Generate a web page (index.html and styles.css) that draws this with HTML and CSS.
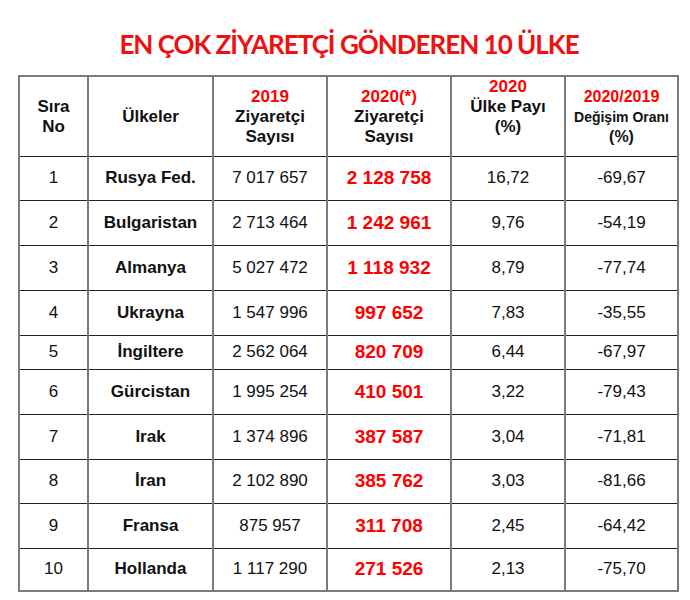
FILE: index.html
```html
<!DOCTYPE html>
<html lang="tr">
<head>
<meta charset="utf-8">
<title>En Çok Ziyaretçi Gönderen 10 Ülke</title>
<link rel="stylesheet" href="styles.css">
</head>
<body>
<div class="page">
  <h1 class="title">EN ÇOK ZİYARETÇİ GÖNDEREN 10 ÜLKE</h1>
  <table class="data">
    <colgroup>
      <col class="c1"><col class="c2"><col class="c3"><col class="c4"><col class="c5"><col class="c6">
    </colgroup>
    <thead>
      <tr class="head">
        <th>Sıra<br>No</th>
        <th>Ülkeler</th>
        <th><span class="red">2019</span><br>Ziyaretçi<br>Sayısı</th>
        <th><span class="red">2020(*)</span><br>Ziyaretçi<br>Sayısı</th>
        <th class="share"><span class="red">2020</span><br>Ülke Payı<br>(%)</th>
        <th class="change"><span class="red big">2020/2019</span><br>Değişim Oranı<br><span class="big">(%)</span></th>
      </tr>
    </thead>
    <tbody>
      <tr class="r44"><td>1</td><td class="cn">Rusya Fed.</td><td>7 017 657</td><td class="hl">2 128 758</td><td>16,72</td><td>-69,67</td></tr>
      <tr class="r45"><td>2</td><td class="cn">Bulgaristan</td><td>2 713 464</td><td class="hl">1 242 961</td><td>9,76</td><td>-54,19</td></tr>
      <tr class="r45"><td>3</td><td class="cn">Almanya</td><td>5 027 472</td><td class="hl">1 118 932</td><td>8,79</td><td>-77,74</td></tr>
      <tr class="r45"><td>4</td><td class="cn">Ukrayna</td><td>1 547 996</td><td class="hl">997 652</td><td>7,83</td><td>-35,55</td></tr>
      <tr class="r34"><td>5</td><td class="cn">İngiltere</td><td>2 562 064</td><td class="hl">820 709</td><td>6,44</td><td>-67,97</td></tr>
      <tr class="r45"><td>6</td><td class="cn">Gürcistan</td><td>1 995 254</td><td class="hl">410 501</td><td>3,22</td><td>-79,43</td></tr>
      <tr class="r45"><td>7</td><td class="cn">Irak</td><td>1 374 896</td><td class="hl">387 587</td><td>3,04</td><td>-71,81</td></tr>
      <tr class="r44"><td>8</td><td class="cn">İran</td><td>2 102 890</td><td class="hl">385 762</td><td>3,03</td><td>-81,66</td></tr>
      <tr class="r45"><td>9</td><td class="cn">Fransa</td><td>875 957</td><td class="hl">311 708</td><td>2,45</td><td>-64,42</td></tr>
      <tr class="r43"><td>10</td><td class="cn">Hollanda</td><td>1 117 290</td><td class="hl">271 526</td><td>2,13</td><td>-75,70</td></tr>
    </tbody>
  </table>
</div>
</body>
</html>
```

FILE: styles.css
```css
html, body {
  margin: 0;
  padding: 0;
  background: #ffffff;
}

.page {
  width: 690px;
  padding: 0 0 0 18px;
  box-sizing: border-box;
}

.title {
  margin: 0;
  padding: 28px 0 0 0;
  height: 47px;
  box-sizing: content-box;
  width: 662px;
  text-align: center;
  font-family: Lato, "Open Sans", sans-serif;
  font-weight: 700;
  font-size: 26px;
  line-height: 32px;
  color: #ee1111;
  letter-spacing: -1px;
}

.data {
  border-collapse: collapse;
  table-layout: fixed;
  width: 661px;
  border: 2px solid #7a7a7a;
  font-family: "Liberation Sans", Arial, sans-serif;
  color: #111111;
}

.c1 { width: 69px; }
.c2 { width: 125px; }
.c3 { width: 114px; }
.c4 { width: 124px; }
.c5 { width: 114px; }
.c6 { width: 113px; }

.data th,
.data td {
  border-left: 2px solid #7a7a7a;
  border-right: 2px solid #7a7a7a;
  border-top: 1px solid #222222;
  border-bottom: 1px solid #222222;
  text-align: center;
  vertical-align: middle;
  padding: 0;
}

.head {
  height: 80px;
}

.data th {
  font-size: 17px;
  line-height: 20px;
  font-weight: 700;
  padding-top: 1px;
}

.data th.share {
  padding-bottom: 18px;
  padding-top: 0;
}

.data th.change {
  font-size: 14px;
}

.data .big {
  font-size: 16px;
}

.red {
  color: #ff0000;
}

.data td {
  font-size: 17px;
}

.data td.cn {
  font-weight: 700;
}

.data td.hl {
  color: #ff0000;
  font-weight: 700;
  font-size: 19px;
}

.r44 { height: 44px; }
.r45 { height: 45px; }
.r43 { height: 43px; }
.r34 { height: 34px; }
```
